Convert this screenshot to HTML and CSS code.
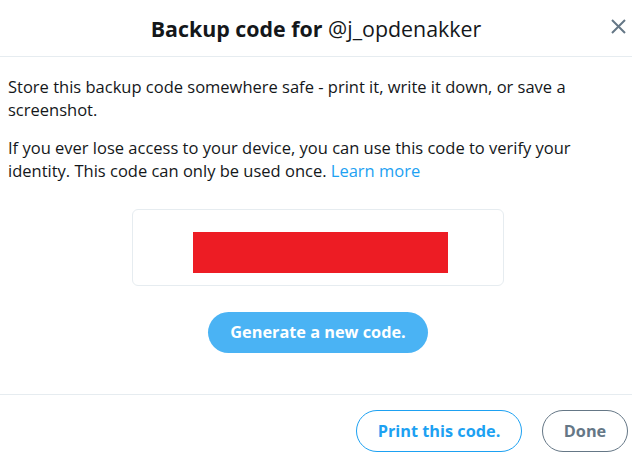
FILE: index.html
```html
<!DOCTYPE html>
<html>
<head>
<meta charset="utf-8">
<link rel="stylesheet" href="styles.css">
</head>
<body>
<div class="modal">
  <header class="modal-header">
    <h1 class="title"><b>Backup code for</b> @j_opdenakker</h1>
    <button class="close" aria-label="Close">
      <svg width="15" height="15" viewBox="0 0 15 15"><path d="M1 1L14 14M14 1L1 14" stroke="#657786" stroke-width="2" fill="none"/></svg>
    </button>
  </header>
  <div class="modal-body">
    <p class="text">Store this backup code somewhere safe - print it, write it down, or save a screenshot.</p>
    <p class="text">If you ever lose access to your device, you can use this code to verify your identity. This code can only be used once. <a class="link" href="#">Learn more</a></p>
    <div class="code-box"><div class="code-redacted"></div></div>
    <div class="gen-row"><button class="btn-gen">Generate a new code.</button></div>
  </div>
  <footer class="modal-footer">
    <button class="btn btn-print">Print this code.</button>
    <button class="btn btn-done">Done</button>
  </footer>
</div>
</body>
</html>
```
FILE: styles.css
```css
html, body { margin: 0; padding: 0; background: #fff; }
body { font-family: "Open Sans", "Noto Sans", sans-serif; color: #14171a; width: 632px; height: 459px; overflow: hidden; }
.modal { display: flex; flex-direction: column; height: 459px; }
.modal-header { position: relative; height: 57px; box-sizing: border-box; border-bottom: 1px solid #e6ecf0; display: flex; align-items: center; justify-content: center; padding-top: 1px; }
.title { margin: 0; font-size: 21.4px; font-weight: 400; color: #14171a; white-space: nowrap; }
.title b { font-weight: 700; }
.close { position: absolute; right: 6px; top: 19px; border: 0; background: none; padding: 0; width: 15px; height: 15px; }
.close svg { display: block; }
.modal-body { padding: 17.8px 8px 0; flex: 1; border-bottom: 1px solid #e6ecf0; }
.text { margin: 0 0 14px; font-size: 16.5px; line-height: 23.5px; color: #14171a; }
.link { color: #1da1f2; text-decoration: none; }
.code-box { box-sizing: border-box; width: 372px; height: 77px; margin: 26.2px 0 0 124px; padding: 22px 0 0 60px; border: 1px solid #e6ecf0; border-radius: 6px; }
.code-redacted { width: 255px; height: 41px; background: #ed1c24; }
.gen-row { display: flex; justify-content: center; margin-top: 26px; padding-left: 4px; }
.btn-gen { width: 220px; height: 41px; border: 0; border-radius: 100px; background: #4ab3f4; color: #fff; font-family: inherit; font-weight: 700; font-size: 16.3px; }
.modal-footer { height: 64px; box-sizing: border-box; display: flex; justify-content: flex-end; align-items: flex-start; gap: 20px; padding: 15px 4px 0 0; }
.btn { height: 42px; border-radius: 100px; background: #fff; font-family: inherit; font-weight: 700; font-size: 16.3px; }
.btn-print { width: 166px; border: 1px solid #1da1f2; color: #1da1f2; }
.btn-done { width: 86px; border: 1px solid #657786; color: #657786; }
```
